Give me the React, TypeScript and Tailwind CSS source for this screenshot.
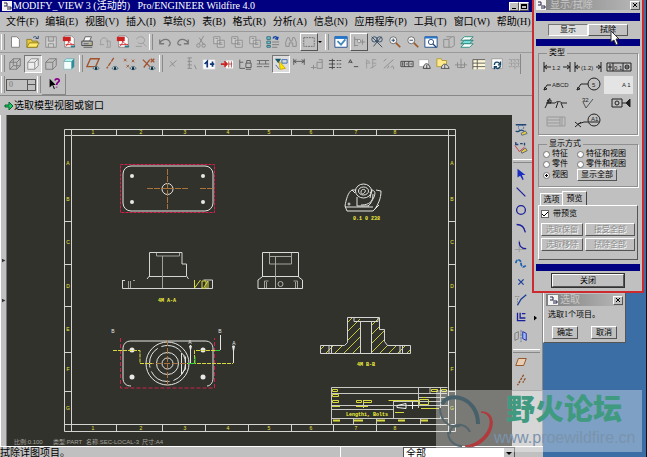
import React from 'react'
import clsx from 'clsx'

const menus = [
  '文件(F)', '编辑(E)', '视图(V)', '插入(I)', '草绘(S)', '表(B)', '格式(R)',
  '分析(A)', '信息(N)', '应用程序(P)', '工具(T)', '窗口(W)', '帮助(H)',
];

const raised = 'border border-t-white border-l-white border-r-[#555] border-b-[#555] bg-[#c0c0c0]';
const sunken = 'border border-t-[#777] border-l-[#777] border-r-white border-b-white bg-[#dcdcdc]';

const paper = <path d="M4 2h6l3 3v9H4z" fill="#fff" stroke="#777" />;
const pdf = (
  <>
    <path d="M3 1h8l3 3v10H3z" fill="#fff" stroke="#888" />
    <path d="M1 2h9v5H1z" fill="#c22" />
    <path d="M4 13c4-2 4-8 3-8s2 6 7 6M4 11h8" stroke="#c22" />
    <path d="M10 13h5" stroke="#2a7a8a" strokeWidth="2" />
  </>
);
const copies = <path d="M2 2h7v8H2zM6 6h8v8H6zM4 4h3M8 9h4M8 11h4" fill="#ccc" stroke="#8a8a8a" />;
const eye = (
  <>
    <path d="M8 13c2-3 5-3 7 0-2 2-5 2-7 0z" fill="#fff" stroke="#2a6070" />
    <circle cx="11.500" cy="13" r="1.500" fill="#123" />
  </>
);

const icons: Record<string, React.ReactNode> = {
  new: paper,
  open: <><path d="M1 5h5l1 2h6v7H1z" fill="#e8c83c" stroke="#8a7a20" /><path d="M4 9h11l-3 5H1z" fill="#ffe96a" stroke="#8a7a20" /><path d="M8 3c2-2 4-1 5 1m1-3v3h-3" stroke="#246" /></>,
  save: <path d="M2 2h12v12H2zM5 2v5h6V2M5 14v-4h6v4" stroke="#888" fill="#d0d0d0" />,
  pdf,
  print: <><path d="M4 7l2-5h7l-2 5z" fill="#fff" stroke="#555" /><path d="M2 7h12v5H2z" fill="#bbb" stroke="#444" /><path d="M4 14h10M4 10h6" stroke="#555" /><path d="M11 10h2" stroke="#c9a800" /></>,
  plot: <path d="M3 11V7c0-5 8-5 8 0v6M2 11h5M9 7h5v7H9" stroke="#999" />,
  find: <path d="M3 5c1-4 8-4 9 0s-5 7-8 3M10 9l4 4M2 13h7" stroke="#999" />,
  undo: <path d="M2 5v5h5M2 10c2-6 10-7 12-1 0 2-1 3-2 4" stroke="#777" strokeWidth="1.500" />,
  redo: <path d="M14 5v5H9M14 10C12 4 4 3 2 9c0 2 2 3 4 2" stroke="#777" strokeWidth="1.500" />,
  cut: <path d="M11 1L6 10M6 3l5 8M3 12a2 2 0 104 0 2 2 0 10-4 0M9 12a2 2 0 104 0 2 2 0 10-4 0" stroke="#888" />,
  copy: copies,
  regen: <><path d="M1 2h4v3H1zM1 7h4v3H1zM1 12h4v2H1z" fill="#6cc" stroke="#367" /><path d="M7 8h8M7 11h8M7 14h6" stroke="#777" /><path d="M8 4c1-3 4-3 5 0m1-2l-1 3-3-1" stroke="#14a" strokeWidth="1.500" /></>,
  binoc: <path d="M2 13V8l2-5h2l1 4h2l1-4h2l2 5v5h-4V9H6v4z" stroke="#888" />,
  box: <path d="M2 3h12v10H2z" stroke="#666" strokeDasharray="2 1" />,
  repaint: <><path d="M1 2h14v12H1z" fill="#fff" stroke="#148" /><path d="M1 3h14" stroke="#27c" strokeWidth="3" /><path d="M4 7l4 4 5-6" stroke="#48b" strokeWidth="2" /></>,
  spin: <><path d="M3 2v11M3 5h4M3 12h4M8 8h7M12 5v6" stroke="#888" /><circle cx="8" cy="7" r="2" fill="#ddd" stroke="#888" /></>,
  orient: <><circle cx="5" cy="5" r="3" stroke="#246" /><circle cx="11" cy="5" r="3" stroke="#246" /><path d="M2 2l12 12M13 2L4 13" stroke="#345" /></>,
  zoomIn: <><circle cx="6" cy="6" r="4" fill="#f4f4f4" stroke="#666" /><path d="M4 6h4M6 4v4" stroke="#246" /><path d="M9 9l5 5" stroke="#9a5a2a" strokeWidth="2" /></>,
  zoomOut: <><circle cx="6" cy="6" r="4" fill="#f4f4f4" stroke="#666" /><path d="M4 6h4" stroke="#246" /><path d="M9 9l5 5" stroke="#9a5a2a" strokeWidth="2" /></>,
  refit: <><path d="M1 2h14v12H1z" fill="#fff" stroke="#148" /><path d="M1 3h14" stroke="#27c" strokeWidth="2" /><circle cx="8" cy="8" r="3" stroke="#247" /><path d="M10 10l4 4" stroke="#247" strokeWidth="1.500" /></>,
  views: <path d="M2 5h6v9H2zM8 5l3-3h3v10l-3 2H8M5 2h6" stroke="#888" />,
  layers: <><path d="M5 2h10l-4 4H1z" fill="#fff" stroke="#287" /><path d="M5 6h10l-4 4H1z" fill="#7dd" stroke="#276" /><path d="M5 10h10l-4 4H1z" fill="#fff" stroke="#287" /></>,
  wire: <path d="M2 6h8v8H2zM6 2h8v8H6zM2 6l4-4M10 6l4-4M10 14l4-4M2 14l4-4" stroke="#777" />,
  hidden: <path d="M2 6h8v8H2zM2 6l4-4h8v8l-4 4M10 6l4-4" stroke="#888" fill="#eee" />,
  nohidden: <path d="M2 6h8v8H2zM2 6l4-4h8v8l-4 4M10 6l4-4" stroke="#777" />,
  shade: <><path d="M2 5h9v9H2z" fill="#f6ffff" stroke="#8bb" /><path d="M2 5l3-3h9l-3 3z" fill="#bff" stroke="#7aa" /><path d="M11 5l3-3v9l-3 3z" fill="#2a8f96" /></>,
  plane: <><path d="M5 2h10l-4 9H1z" stroke="#a0522d" strokeWidth="1.500" />{eye}</>,
  axis: <><path d="M10 1L2 13" stroke="#a0522d" strokeDasharray="5 1" strokeWidth="1.500" />{eye}</>,
  point: <><path d="M1 2l3 3M4 2L1 5M10 3l3 3M13 3l-3 3M4 9l3 3M7 9l-3 3" stroke="#a0522d" />{eye}</>,
  csys: <><path d="M1 3l8 8M9 3l-7 9M10 2l4 4M14 2l-4 4" stroke="#a0522d" strokeWidth="1.500" />{eye}</>,
  cross: <path d="M4 11l8-7M5 5l5 6" stroke="#888" />,
  ladder: <path d="M4 1h5M4 5h5M4 9h5M4 13h5M6 1v12M12 9l2 5" stroke="#888" />,
  moveBox: <><path d="M1 3h14v11H1z" fill="#fff" stroke="#ccc" /><path d="M3 8l3-3v7M9 8h5M12 5v6" stroke="#137" strokeWidth="2" /></>,
  dimMove: <><path d="M7 4h8v9H7z" fill="#fff" /><path d="M1 8h7M5 5l3 3-3 3" stroke="#c22" strokeWidth="2" /><path d="M10 5v7M13 5v7M10 8h4" stroke="#a44" /></>,
  lock: <path d="M2 3v10h6M2 6h4M9 7h6v5H9zM10 7V4h4v3M9 14h6" stroke="#555" />,
  lines: <path d="M1 4h14M1 8h14M1 11h6M9 11h6M4 4v4M11 4v4" stroke="#666" />,
  show: <><path d="M1 2h7l-3 5z" fill="#156" /><path d="M6 5l7 8-6 1z" fill="#ffe600" stroke="#c9a800" /><path d="M9 3h6v4H9zM2 9l4 5" stroke="#36a" /></>,
  dim: <path d="M2 2v7M14 2v7M2 5h12M5 3L2 5l3 2M11 3l3 2-3 2" stroke="#555" />,
  note: <path d="M1 12h6M4 9v5M8 6h6v7H8zM10 3h4v3" stroke="#888" />,
  arrows: <path d="M1 4h7M1 8h7M1 12h7M5 2v12M10 4h2M13 4h2M10 8h2M13 8h2M10 12h2M13 12h2" stroke="#444" />,
  text: <path d="M3 7l2-4 2 4M4 6h3M9 11h5" stroke="#444" />,
  grid: <path d="M2 3l5 3M2 7h5M3 13V4M9 3h5M9 7h5M10 3v10M7 13l7-4" stroke="#999" />,
  surf: <path d="M2 13L13 3M2 5l3-3M10 12c2-3 4-1 3 2M6 13l2-3" stroke="#888" />,
  gtol: <path d="M1 5h14v6H1zM5 5v6M10 5v6M3 6v4M7 8h2M12 8h2" stroke="#444" />,
  draft: <><path d="M1 3h11v8H1z" fill="#fff" stroke="#aaa" /><path d="M6 13c1-8 7-6 8 0zM10 9v4" fill="#ddd" stroke="#333" /></>,
  draft2: <><path d="M1 2h5l1 2h5v7H1z" fill="#ffe98a" stroke="#a93" /><path d="M6 13c1-7 7-6 9 0zM10 9v4" fill="#ddd" stroke="#444" /></>,
  axes: <path d="M1 9h14M8 2v11M4 6v6h8V6" stroke="#888" />,
  table: <><path d="M1 3h14v11H1z" fill="#fff8d8" /><path d="M1 3h14M1 7h14M1 11h14M6 3v11M1 3v11" stroke="#555" /></>,
  update: <><path d="M2 2h12v11H2z" fill="#fff" stroke="#999" /><path d="M5 9c0-4 5-4 6-1m1-3v4H9M12 10c-1 4-5 4-6 1m-1 3v-3h3" stroke="#146" strokeWidth="1.500" /></>,
  rows: <path d="M1 3h14M1 7h14M1 11h14M4 3v8M8 3v11M12 3v8" stroke="#999" strokeDasharray="3 1" />,
  help: <><path d="M3 2v10l3-3 2 5 1-1-2-4h3z" fill="#000" /><path d="M9 4c1-3 5-2 5 0s-3 2-3 5m0 2v1" stroke="#808" strokeWidth="2" /></>,
  sketcher: <><circle cx="8" cy="5" r="3" stroke="#36a" strokeDasharray="2 1" /><path d="M2 2h12M2 9c3 4 5-5 11 2" stroke="#247" strokeWidth="1.500" /><path d="M8 12l5-3 2 3-6 2z" fill="#e8d23c" stroke="#567" /></>,
  sketchRef: <><path d="M2 1v3h3M7 3h3M12 2v3" stroke="#247" strokeWidth="1.500" /><path d="M1 5l5 7 6-5" stroke="#c33" /><path d="M8 12l5-4 2 3-6 3z" fill="#e8d23c" stroke="#557" /></>,
  select: <path d="M4 2v10l3-2 3 5 1-1-2-5h4z" fill="#1b2cc0" />,
  line: <path d="M3 3l10 10" stroke="#1a1f9c" strokeWidth="1.500" />,
  circle: <circle cx="8" cy="8" r="5" stroke="#1a1f9c" strokeWidth="1.500" />,
  arc: <path d="M3 4c6 0 9 4 10 9" stroke="#1a1f9c" strokeWidth="1.500" />,
  fillet: <><path d="M6 1v14M1 12h12" stroke="#999" /><path d="M6 3c0 5 2 8 8 8" stroke="#1a1f9c" strokeWidth="1.500" /></>,
  spline: <path d="M2 7c1-6 6-4 6 0s3 6 6 2" stroke="#1a5fb0" strokeWidth="2" strokeDasharray="4 1" />,
  pt: <path d="M5 5l6 6M11 5l-6 6" stroke="#1a3f9c" strokeWidth="1.500" />,
  chamfer: <><path d="M1 4h5M4 14V6" stroke="#888" strokeDasharray="2 1" /><path d="M4 14l4-7 6-5" stroke="#1a3f9c" strokeWidth="1.500" /></>,
  offset: <path d="M4 2v9h9M7 2v6h6M9 3h4" stroke="#1a1f9c" strokeWidth="1.500" />,
  mirror: <><path d="M1 5l4-2v8l-4 2z" stroke="#777" /><path d="M8 1v14" stroke="#579" strokeDasharray="3 1" /><path d="M10 3l4 2v8l-4-2z" fill="#9bf" stroke="#1a1f9c" /></>,
  datum: <path d="M5 4h9l-3 8H2z" fill="#e8cdb0" stroke="#8a4a20" />,
  center: <path d="M11 2L4 14M13 6l-3 5" stroke="#8a4a20" strokeWidth="1.500" strokeDasharray="3 1" />,
};

function Icon({ name }: { name: string }) {
  return <svg viewBox="0 0 16 16" className="w-3.5 h-3.5" fill="none">{icons[name]}</svg>
}

function Tool({ name, look }: { name: string; look?: string }) {
  return (
    <button aria-label={name} className={clsx('w-[18px] h-[18px] flex items-center justify-center shrink-0', look)}>
      <Icon name={name} />
    </button>
  )
}

function Grip() {
  return <div className="w-1 mx-px self-stretch my-0.5 border-l border-r border-l-white border-r-[#8a8a8a] shrink-0" />
}

function Group({ names, looks = {}, className }: { names: string[]; looks?: Record<string, string>; className?: string }) {
  return (
    <div className={clsx('flex items-center justify-between', className)}>
      {names.map((name, i) => <Tool key={i} name={name} look={looks[name]} />)}
    </div>
  )
}

function Drawing() {
  const columns = [116, 162, 205, 248, 291, 333, 376];
  const rows = [221, 264, 306, 352, 391];
  return (
    <svg viewBox="7 115 505 331" preserveAspectRatio="xMinYMin meet" className="flex-1 min-w-0 h-full bg-[#32322c]" fill="none" fontFamily="Liberation Sans, Noto Sans CJK SC, sans-serif">
      <defs>
        <clipPath id="cut"><path d="M320 345h24l3-3v-25h13v36h-40zM371 317h8v12h5v12l4 4h23v8h-40z" /></clipPath>
      </defs>
      {/* sheet frame */}
      <g stroke="#d4d4d0">
        <path d="M64.500 129.500h391v302h-391zM71.500 135.500h377v289h-377z" />
        {columns.map((x) => <path key={x} d={`M${x + 0.5} 129v6M${x + 0.5} 424v7`} />)}
        {rows.map((y) => <path key={y} d={`M64 ${y + 0.5}h7M448 ${y + 0.5}h7`} />)}
        <path d="M64 135.500h7M448 135.500h7M71.500 129v6M448.500 129v6M64 424.500h7M448 424.500h7M71.500 424v7M448.500 424v7" />
      </g>
      <g fill="#e8e83c" fontSize="5" textAnchor="middle">
        {[93, 141, 185, 228, 269, 311, 356, 395].map((x, i) => (
          <React.Fragment key={x}>
            <text x={x} y="134">{i + 1}</text>
            <text x={x} y="430">{i + 1}</text>
          </React.Fragment>
        ))}
        {[165, 201, 244, 288, 331, 371, 410].map((y, i) => (
          <React.Fragment key={y}>
            <text x="68" y={y}>{'ABCDEFG'[i]}</text>
            <text x="452" y={y}>{'ABCDEFG'[i]}</text>
          </React.Fragment>
        ))}
      </g>

      {/* top view */}
      <rect x="120.500" y="164.500" width="94" height="48" stroke="#d0204c" strokeDasharray="3 1" />
      <rect x="123" y="166" width="90" height="45" rx="8" stroke="#e4e4e4" />
      <circle cx="167.500" cy="189" r="5.500" stroke="#e4e4e4" />
      <path d="M147 188.500h41M167.500 169v40M200 188.500h14" stroke="#a8743c" strokeDasharray="6 1" />
      <g fill="#e8e8e8">
        {[[132, 176], [203, 176], [132, 202], [203, 202]].map(([x, y]) => <circle key={x + y * 500} cx={x} cy={y} r="2" />)}
        {[[132, 350], [203, 350], [132, 377], [203, 377]].map(([x, y]) => <circle key={x + y * 500} cx={x} cy={y} r="2.500" />)}
      </g>

      {/* section A-A */}
      <path d="M147 279l2.500-3v-23.500h32.500v11.500h4.500v12l2 3M149 276.500h37M122.500 280v8.500h90v-8.500h-9M122 280.500h3" stroke="#d4d4d4" />
      <path d="M156.500 253v3h23v-3M162.500 256v32M128.500 281v7M130.500 281v7M133 280.500h2" stroke="#a0a09c" />
      <path d="M194.500 280v8l6-8M202 288v-7h4v7h-4M204 287l4-6M208 281v7" stroke="#d8d840" />

      {/* side view */}
      <path d="M262.500 276v-23.500h36v23.500M262 276.500h37M262 277l-4 3v8.500h44.500v-8.500l-4-3" stroke="#dcdcdc" />
      <path d="M269.500 253v11h22v-11M270 256.500h21M275.500 256v32M264.500 288v-7h4M266.500 288v-6M297.500 288v-7h-4M295.500 288v-6" stroke="#a4a4a0" />
      <circle cx="280.500" cy="284" r="2.500" stroke="#b0b0ac" />

      {/* isometric view */}
      <g stroke="#e4e4e4">
        <path d="M345 206c1-6 3-14 7-16l4 0M345 206l2 5h26l6-6M345 207h28M376 190l5 1c0 8-3 13-6 18M373 194c0 6-2 10-5 12M357 197v9h12M352 190l3 3" />
        <ellipse cx="363.500" cy="191" rx="8" ry="7" />
        <ellipse cx="363.500" cy="191" rx="5" ry="4" />
        <path d="M361 192c0-4 6-3 4 0s-4 2-4 0M370 193c2-4 7-3 4 4s-8 8-13 8M372 189l-2 9" />
        <circle cx="349" cy="204" r="1" />
      </g>

      {/* front view with cutting planes */}
      <path d="M120.500 338v50h94v-50" stroke="#d0204c" strokeDasharray="4 2" />
      <path d="M131 386c-5 0-8-3-8-8v-29c0-5 3-8 8-8h74c5 0 8 3 8 8v29c0 5-3 8-6 8" stroke="#e4e4e4" />
      <g stroke="#e4e4e4">
        <circle cx="167.500" cy="363.500" r="21.500" />
        <circle cx="167.500" cy="363.500" r="18" strokeDasharray="22 4" />
        <circle cx="167.500" cy="363.500" r="11" />
        <circle cx="167.500" cy="363.500" r="5.500" />
        <path d="M181.500 353v21l4-5v-12zM190.500 345v18M220.500 335v15M233.500 346v17M190.500 350l-1-4h2zM233.500 351l-1-5h2z" />
      </g>
      <path d="M167.500 340v47M148 363.500h40" stroke="#a8743c" strokeDasharray="6 2" />
      <path d="M113 350.500h27v13h12M187 363.500h46M220 350.500h-25.500v13" stroke="#d8d83c" strokeDasharray="4 1" />
      <path d="M188 363.500h7v-7M215 350.500h5" stroke="#38d038" />
      <g fill="#e8e8e8" fontSize="5" textAnchor="middle">
        <text x="113" y="333">B</text>
        <text x="220" y="333">B</text>
        <text x="190" y="344">A</text>
        <text x="234" y="345">A</text>
      </g>

      {/* section B-B */}
      <path clipPath="url(#cut)" stroke="#c8c83c" d="M314 356l50-50M323 356l50-50M332 356l50-50M341 356l50-50M350 356l50-50M359 356l50-50M368 356l50-50M377 356l50-50M386 356l50-50M395 356l50-50M404 356l50-50" />
      <path d="M320.500 345.500h24l3-3v-25h32v12h5v12l3 4h23v8h-90zM360.500 321v32M371.500 321v32M354 318v3.500h24v-3.500M329 346v7M331.500 346v7M400 346v7M402.500 346v7" stroke="#d4d4d4" />

      {/* title block */}
      <path d="M331.500 424v-36.500h116M331 393.500h116M331 405.500h117M331 409.500h63M331 418.500h117M393.500 400v18M418.500 388v20M430 388v6M440.500 388v30M353.500 418v6M376.500 418v6M420.500 418v6M363.500 400v8M418 397.500h29M394 401.500h53" stroke="#c8c8c4" />
      <g stroke="#d8d840">
        <path d="M332.500 389.500h5v2h-5zM332.500 394.500h6v2h-6zM332.500 400.500h6v2h-6zM356.500 400.500h5v2h-5zM363.500 400.500h8v2h-8zM388.500 400.500h30M332 406.500h8M356 406.500h12M419.500 399.500h9v5h-9zM422 397.500h4M431.500 389.500h6v2h-6zM441.500 389.500h5v2h-5zM395 412.500h9M421 408.500h19" />
        <path d="M333 420.500h7M354 420.500h9M377 420.500h8M398 420.500h7M421 420.500h7" strokeWidth="2" />
      </g>
      <path d="M397 405.500l9-2v5l-9-1zM408 405.500h10M412.500 402v7" stroke="#f0f0f0" />
      <g fill="#f4f43c" fontSize="5" fontWeight="bold" fontFamily="Liberation Mono, monospace">
        <text x="346" y="416">Lengthi, Bolts</text>
        <text x="158" y="302">4M A-A</text>
        <text x="357" y="366">4M B-B</text>
        <text x="353" y="220">0.1 0 238</text>
      </g>
      <g fill="#a4a49c" fontSize="6">
        <text x="14" y="444">比例:0.100</text>
        <text x="53" y="444">类型:PART</text>
        <text x="86" y="444">名称:SEC-LOCAL-3</text>
        <text x="142" y="444">尺寸:A4</text>
      </g>
    </svg>
  )
}

function WindowIcon() {
  return (
    <svg viewBox="0 0 10 10" className="w-2.5 h-2.5 shrink-0" fill="none">
      <path d="M0 0h10v10H0z" fill="#f4f4f4" />
      <path d="M2 2h3v3H2M5 6h4v2H5" stroke="#224" />
    </svg>
  )
}

function CloseButton() {
  return (
    <button aria-label="close" className={clsx('w-2.5 h-[9px] flex items-center justify-center', raised)}>
      <svg viewBox="0 0 6 6" className="w-1.5 h-1.5"><path d="M1 1l4 4M5 1L1 5" stroke="#000" /></svg>
    </button>
  )
}

const types: { id: string; art: React.ReactNode }[] = [
  { id: 'dimension', art: <><path d="M1 3v10M27 3v10M1 8h7M20 8h7M4 6L1 8l3 2M24 6l3 2-3 2" /><text x="9" y="11">1.2</text></> },
  { id: 'reference', art: <><path d="M1 3v10M27 3v10M1 8h5M22 8h5M4 6L1 8l3 2M24 6l3 2-3 2" /><text x="7" y="11">(1.2)</text></> },
  { id: 'tolerance', art: <><path d="M2 4h24v8H2zM8 4v8M18 4v8M3 8h4M5 5v6M20 8h4" /><circle cx="22" cy="8" r="2" /><text x="9" y="11">0.1</text></> },
  { id: 'note', art: <><path d="M1 13l3-5h4M1 13l1-3 2 2z" /><text x="9" y="10">ABCD</text></> },
  { id: 'balloon', art: <><path d="M3 13l4-6h7M3 13l1-3 2 2z" /><circle cx="20" cy="7" r="6" /><text x="18" y="10">5</text></> },
  { id: 'axis', art: <text x="17" y="10">A 1</text> },
  { id: 'symbol', art: <path d="M2 13l5-10M4 5l4 3M3 8h9M12 8c2-2 5-2 7 0h5M15 7l-2 6M18 8l2 5M5 5h3v3H5z" /> },
  { id: 'finish', art: <><path d="M9 7l3 6 7-9" stroke="#555" /><text x="8" y="7">32</text></> },
  { id: 'datum', art: <><path d="M7 4h10v8H7zM17 8h4" /><path d="M21 8l4-4v8z" fill="#222" /><circle cx="12" cy="8" r="2" /></> },
  { id: 'cosmetic', art: <path d="M4 4h15v9H4zM4 7h13M4 10h13M17 4v9M19 4h3v9h-3" stroke="#999" /> },
  { id: 'target', art: <><path d="M1 9l6 5M1 14l6-5M4 11l6-2h4" /><circle cx="20" cy="7" r="6" /><path d="M15 9h10" /><text x="17" y="8">A1</text></> },
];

function ShowErase() {
  const fade = 'text-[#8a8a8a] [text-shadow:1px_1px_0_#fff]';
  return (
    <section className="absolute top-0 right-0.5 w-28 border-2 border-t-0 border-[#cc2a2e] bg-[#c0c0c0] px-0.5 pb-1 text-[8px] leading-[10px]">
      <header className="flex items-center h-2.5 bg-linear-to-r from-[#808080] to-[#b8b8b8]">
        <WindowIcon />
        <h2 className="ml-1 text-[10px] text-[#c8c8c8]">显示/拭除</h2>
        <div className="ml-auto"><CloseButton /></div>
      </header>
      <div className="h-2 mt-[3px] bg-[#000080]" />
      <div className="flex px-3 py-[3px]">
        <button className={clsx('flex-1 h-3 flex items-center justify-center', sunken)}>显示</button>
        <button className={clsx('flex-1 h-3 flex items-center justify-center', raised)}>拭除</button>
      </div>
      <div className="h-[7px] bg-[#000080]" />

      <fieldset className="mx-0.5 mt-0.5 border border-[#909090] px-1 pb-1 shadow-[1px_1px_0_#fff]">
        <legend className="ml-1 px-0.5">类型</legend>
        <div className="grid grid-cols-3 gap-x-0.5">
          {types.map(({ id, art }) => (
            <button key={id} aria-label={id} className={clsx('h-[18px] flex items-center justify-center', id === 'axis' && 'bg-[#e4e4e4]')}>
              <svg viewBox="0 0 28 16" className="w-7 h-4" fill="none" stroke="#222" fontSize="6" fontFamily="Liberation Sans, sans-serif">
                <g className="[&_text]:fill-[#222] [&_text]:stroke-none">{art}</g>
              </svg>
            </button>
          ))}
        </div>
      </fieldset>

      <fieldset className="mx-0.5 mt-1 border border-[#909090] pl-1 pb-[5px] shadow-[1px_1px_0_#fff]">
        <legend className="ml-1 px-0.5">显示方式</legend>
        <div className="grid grid-cols-[34px_1fr] items-center">
          <Radio label="特征" />
          <Radio label="特征和视图" />
          <Radio label="零件" />
          <Radio label="零件和视图" />
          <Radio label="视图" checked />
          <button className={clsx('w-10 h-3 flex items-center justify-center', raised)}>显示全部</button>
        </div>
      </fieldset>

      <div className="flex items-end mt-1 ml-1">
        <button className="w-[22px] h-3 border-t border-l border-white">选项</button>
        <button className="w-[25px] h-3.5 border-t border-l border-white border-r border-r-[#444]">预览</button>
      </div>
      <div className="mx-0.5 border border-t-white border-l-white border-r-[#555] border-b-[#555] px-0.5 pt-[3px] pb-2">
        <label className="flex items-center gap-1">
          <input type="checkbox" defaultChecked className="peer sr-only" />
          <span className="w-2 h-2 border border-[#666] bg-white flex items-center justify-center">
            <svg viewBox="0 0 6 6" className="w-1.5 h-1.5" fill="none"><path d="M0 3l2 2 4-4" stroke="#000" /></svg>
          </span>
          带预览
        </label>
        <div className="grid grid-cols-[42px_1fr] gap-x-0.5 gap-y-0.5 mt-1">
          {['选取保留', '接受全部', '选取移除', '拭除全部'].map((text) => (
            <button key={text} disabled className={clsx('h-[13px] flex items-center justify-center', raised, fade)}>{text}</button>
          ))}
        </div>
      </div>
      <div className="h-[7px] mt-1 bg-[#000080]" />
      <button className={clsx('mx-auto mt-[3px] w-[72px] h-[13px] flex items-center justify-center outline outline-[#333]', raised)}>关闭</button>
    </section>
  )
}

function Radio({ label, checked }: { label: string; checked?: boolean }) {
  return (
    <label className="flex items-center gap-0.5 whitespace-nowrap">
      <input type="radio" name="showBy" defaultChecked={checked} className="appearance-none w-[7px] h-[7px] rounded-full border border-[#777] bg-white checked:bg-[radial-gradient(#000_35%,#fff_40%)]" />
      {label}
    </label>
  )
}

function SelectDialog() {
  return (
    <section className={clsx('absolute top-[292px] right-5 w-[83px] h-[51px] px-0.5 text-[8px] leading-[10px]', raised)}>
      <header className="flex items-center h-3 mt-px pl-0.5 bg-linear-to-r from-[#808080] to-[#b8b8b8]">
        <WindowIcon />
        <h2 className="ml-0.5 text-[10px] text-[#c8c8c8]">选取</h2>
        <div className="ml-auto"><CloseButton /></div>
      </header>
      <p className="mt-1 ml-0.5">选取1个项目。</p>
      <div className="flex justify-between mt-1.5 px-1.5">
        <button className={clsx('w-[26px] h-[13px] flex items-center justify-center', raised)}>确定</button>
        <button className={clsx('w-[26px] h-[13px] flex items-center justify-center', raised)}>取消</button>
      </div>
    </section>
  )
}

function Watermark() {
  return (
    <div className="absolute right-1 bottom-[5px] w-[206px] h-[62px] flex items-start bg-white/35">
      <svg viewBox="0 0 62 62" className="w-[62px] h-[62px] shrink-0" fill="none">
        <path d="M6 14C14 0 42 8 42 34" stroke="#47606a" strokeWidth="4" />
        <path d="M4 18c0 14 10 20 20 18M14 44c0-12 16-12 20-2M12 42c0 8 6 14 14 14" stroke="#54666c" strokeWidth="2" />
        <path d="M45 22c12-1 14 12 8 22-5 9-16 15-24 12 12-1 24-12 25-22 1-7-3-11-9-12z" fill="#b03a3c" stroke="#b03a3c" />
      </svg>
      <div className="flex-1 pt-1 whitespace-nowrap font-['Liberation_Sans','Noto_Sans_CJK_SC',sans-serif]">
        <p className="ml-2 text-[29px] leading-8 font-black text-[#3f9a80]">野火论坛</p>
        <p className="-ml-1 text-[16px] leading-6 text-[#7a93ad]">www.proewildfire.cn</p>
      </div>
    </div>
  )
}

function App() {
  return (
    <div className="relative h-screen overflow-hidden bg-[#3a6ea5] border-r border-[#111] font-['Liberation_Serif','Noto_Sans_CJK_SC',serif] text-[10px] text-black">
      <main className="mr-[103px] h-full flex flex-col bg-[#c0c0c0]">
        <header className="flex items-center h-3 shrink-0 bg-[#000080] text-white pl-0.5">
          <WindowIcon />
          <h1 className="ml-px text-[10px] leading-3 whitespace-pre">MODIFY_VIEW 3 (活动的)   Pro/ENGINEER Wildfire 4.0</h1>
          <div className="flex ml-auto mr-3.5">
            <button aria-label="minimize" className={clsx('w-2.5 h-[9px] flex items-end justify-center', raised)}><span className="w-1 h-px mb-px bg-black" /></button>
            <button aria-label="maximize" className={clsx('w-2.5 h-[9px] flex items-center justify-center', raised)}><span className="w-1.5 h-[5px] border border-t-2 border-black" /></button>
          </div>
        </header>

        <nav className="flex items-center gap-[7px] h-[19px] shrink-0 px-1.5 overflow-hidden">
          {menus.map((menu) => <button key={menu} className="whitespace-nowrap">{menu}</button>)}
        </nav>

        <div className="flex items-center h-[21px] shrink-0 border-t border-[#999]">
          <Grip />
          <Group className="w-[142px]" names={['new', 'open', 'save', 'pdf', 'print', 'plot', 'pdf', 'find']} />
          <Grip />
          <Group className="w-[160px] ml-0.5" names={['undo', 'redo', 'cut', 'copy', 'copy', 'copy', 'regen', 'binoc', 'box']} looks={{ box: raised }} />
          <svg viewBox="0 0 6 6" className="w-1.5 h-1.5 mx-px"><path d="M1 2h4L3 4z" /></svg>
          <Grip />
          <Group className="w-[142px] ml-0.5" names={['repaint', 'spin', 'orient', 'zoomIn', 'zoomOut', 'refit', 'views', 'layers']} looks={{ spin: raised }} />
        </div>

        <div className="flex items-center h-[22px] shrink-0 border-t border-[#999]">
          <Grip />
          <Group className="w-[72px]" names={['wire', 'hidden', 'nohidden', 'shade']} looks={{ hidden: sunken }} />
          <Grip />
          <Group className="w-[74px]" names={['plane', 'axis', 'point', 'csys']} />
          <Grip />
          <Group className="w-[356px] pr-px" names={['cross', 'ladder', 'moveBox', 'dimMove', 'lock', 'lines', 'show', 'dim', 'note', 'arrows', 'text', 'grid', 'surf', 'gtol', 'draft', 'draft2', 'axes', 'table', 'update', 'rows']} looks={{ show: sunken }} />
          <div className="w-px h-5 bg-[#888]" />
        </div>

        <div className="flex items-center h-[21px] shrink-0">
          <Grip />
          <div className="flex w-[30px] h-3 border border-[#555]">
            <input aria-label="value" defaultValue="0" className="w-5 bg-transparent px-0.5 text-[8px] text-[#777]" />
            <span className="flex-1 border-l border-[#555] flex flex-col">
              <span className="flex-1 border-b border-[#555]" />
              <span className="flex-1" />
            </span>
          </div>
          <Grip />
          <div className="flex w-6 h-[21px] items-center justify-center border-r border-b border-[#888]">
            <Tool name="help" />
          </div>
        </div>

        <div className="flex items-center h-5 shrink-0 px-1 border-t border-[#888]">
          <svg viewBox="0 0 10 10" className="w-2.5 h-2.5"><path d="M1 4h4V1l4 4-4 4V6H1z" fill="#1fc45a" stroke="#063" /></svg>
          <p>选取模型视图或窗口</p>
        </div>

        <div className="flex flex-1 min-h-0">
          <div className="w-[7px] shrink-0 flex flex-col items-center justify-center gap-9 border-l border-white border-r border-r-[#777]">
            <span className="w-1 h-1 bg-[#333] [clip-path:polygon(0_0,100%_50%,0_100%)]" />
            <span className="w-1 h-1 bg-[#333] [clip-path:polygon(0_0,100%_50%,0_100%)]" />
          </div>
          <Drawing />
          <aside className="w-[31px] shrink-0 flex flex-col border-r border-[#888] pt-1.5">
            <div className="flex flex-col w-5">
              {['sketcher', 'sketchRef'].map((name) => <Tool key={name} name={name} />)}
            </div>
            <div className="w-[27px] h-1 my-0.5 mx-px border-t border-b border-t-white border-b-[#888]" />
            {['select', 'line', 'circle', 'arc', 'fillet', 'spline', 'pt', 'chamfer', 'offset', 'mirror'].map((name) => (
              <div key={name} className="flex items-center">
                <Tool name={name} />
                {name === 'offset' && <span className="ml-1 w-[3px] h-[5px] bg-black [clip-path:polygon(0_0,100%_50%,0_100%)]" />}
              </div>
            ))}
            <div className="w-[27px] h-1 mt-1 mx-px border-t border-b border-t-white border-b-[#888]" />
            {['datum', 'center'].map((name) => <Tool key={name} name={name} />)}
            <div className="border-t border-[#888] mt-px" />
          </aside>
        </div>

        <footer className="flex items-start h-[11px] shrink-0 overflow-hidden border-t border-white">
          <p className="w-[341px] leading-3 border-r border-white">拭除详图项目。</p>
          <select aria-label="filter" className="ml-auto mr-7 w-28 h-3.5 px-0.5 appearance-none border border-[#555] bg-white text-[10px] leading-3">
            <option>全部</option>
          </select>
          <span className="-ml-[39px] w-2.5 h-2.5 mt-px mr-[29px] bg-[#c0c0c0] flex items-center justify-center pointer-events-none">
            <svg viewBox="0 0 6 6" className="w-1.5 h-1.5"><path d="M0 2h6L3 5z" /></svg>
          </span>
        </footer>
      </main>

      <SelectDialog />
      <ShowErase />
      <Watermark />
      {/* mouse pointer */}
      <svg viewBox="0 0 10 16" className="absolute top-[30px] right-[26px] w-2.5 h-4"><path d="M1 1v11l3-2 2 5 2-1-2-5h3z" fill="#fff" stroke="#333" /></svg>
    </div>
  )
}

export default App
